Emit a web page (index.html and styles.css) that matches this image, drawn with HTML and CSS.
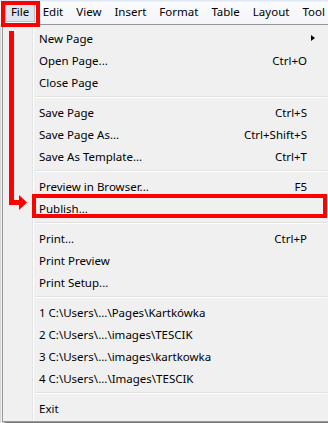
FILE: index.html
```html
<!DOCTYPE html>
<html>
<head>
<meta charset="utf-8">
<link rel="stylesheet" href="styles.css">
</head>
<body>
<div class="screen">
  <div class="menubar">
    <span class="mitem active">File</span>
    <span class="mitem">Edit</span>
    <span class="mitem">View</span>
    <span class="mitem">Insert</span>
    <span class="mitem">Format</span>
    <span class="mitem">Table</span>
    <span class="mitem">Layout</span>
    <span class="mitem">Tool</span>
  </div>
  <div class="popup">
    <div class="row"><span>New Page</span><span class="sub"></span></div>
    <div class="row"><span>Open Page...</span><span class="key">Ctrl+O</span></div>
    <div class="row"><span>Close Page</span></div>
    <div class="sep"></div>
    <div class="row"><span>Save Page</span><span class="key">Ctrl+S</span></div>
    <div class="row"><span>Save Page As...</span><span class="key">Ctrl+Shift+S</span></div>
    <div class="row"><span>Save As Template...</span><span class="key">Ctrl+T</span></div>
    <div class="sep"></div>
    <div class="row"><span>Preview in Browser...</span><span class="key">F5</span></div>
    <div class="row"><span>Publish...</span></div>
    <div class="sep"></div>
    <div class="row"><span>Print...</span><span class="key">Ctrl+P</span></div>
    <div class="row"><span>Print Preview</span></div>
    <div class="row"><span>Print Setup...</span></div>
    <div class="sep"></div>
    <div class="row"><span>1 C:\Users\...\Pages\Kartkówka</span></div>
    <div class="row"><span>2 C:\Users\...\images\TESCIK</span></div>
    <div class="row"><span>3 C:\Users\...\images\kartkowka</span></div>
    <div class="row"><span>4 C:\Users\...\Images\TESCIK</span></div>
    <div class="sep"></div>
    <div class="row"><span>Exit</span></div>
  </div>
  <div class="mark-file"></div>
  <div class="mark-publish"></div>
  <svg class="arrow" width="40" height="215" viewBox="0 0 40 215">
    <path d="M9 31 H14 V200 H19 V195 L27 202.5 L19 210 V205 H9 Z" fill="#ff0000"/>
  </svg>
</div>
</body>
</html>
```
FILE: styles.css
```css
html, body {
  margin: 0;
  padding: 0;
}
body {
  width: 328px;
  height: 423px;
  overflow: hidden;
  background: #f4f4f4;
  font-family: "Noto Sans", "Open Sans", sans-serif;
  font-size: 11.5px;
  color: #000;
}
.screen {
  position: relative;
  width: 328px;
  height: 423px;
  overflow: hidden;
  background: linear-gradient(to right, #d8d8d8 0, #d8d8d8 1px, #fafafa 1px, #fafafa 3px);
}
.menubar {
  height: 24px;
  display: flex;
  align-items: center;
  padding-left: 4px;
  background: linear-gradient(to bottom, #dfe8f4 0, #dfe8f4 1px, #fafbfd 2px, #f3f5f9 100%);
  white-space: nowrap;
}
.mitem {
  padding: 0 6.5px;
  line-height: 20px;
}
.mitem.active {
  padding: 0 5.5px;
  margin: 0 1.4px;
  background: #dfe6ee;
  box-shadow: inset 0 0 0 1px #b7c2cf;
}
.popup {
  margin-left: 2px;
  width: 322px;
  border: 1px solid #979797;
  background:
    linear-gradient(to right, transparent 29px, #e2e3e3 29px, #e2e3e3 30px, #ffffff 30px, #ffffff 31px, transparent 31px),
    #f0f0f0;
  padding: 2px;
  box-shadow: 2px 3px 3px rgba(0, 0, 0, 0.55);
}
.row {
  height: 22px;
  display: flex;
  align-items: center;
  justify-content: space-between;
  padding-left: 34px;
  padding-right: 20px;
  white-space: nowrap;
}
.key {
  text-align: right;
}
.sub {
  width: 0;
  height: 0;
  border-top: 3.5px solid transparent;
  border-bottom: 3.5px solid transparent;
  border-left: 4px solid #000;
  margin-right: -8px;
}
.sep {
  height: 8px;
  margin-left: 30px;
  background: linear-gradient(to bottom, transparent 3px, #e0e0e0 3px, #e0e0e0 4px, #ffffff 4px, #ffffff 5px, transparent 5px);
}
.mark-file {
  position: absolute;
  left: 1px;
  top: 1px;
  width: 31px;
  height: 18px;
  border: 4px solid #ff0000;
}
.mark-publish {
  position: absolute;
  left: 32px;
  top: 194px;
  width: 287px;
  height: 16px;
  border: 4px solid #ff0000;
}
.arrow {
  position: absolute;
  left: 0;
  top: 0;
}
```
